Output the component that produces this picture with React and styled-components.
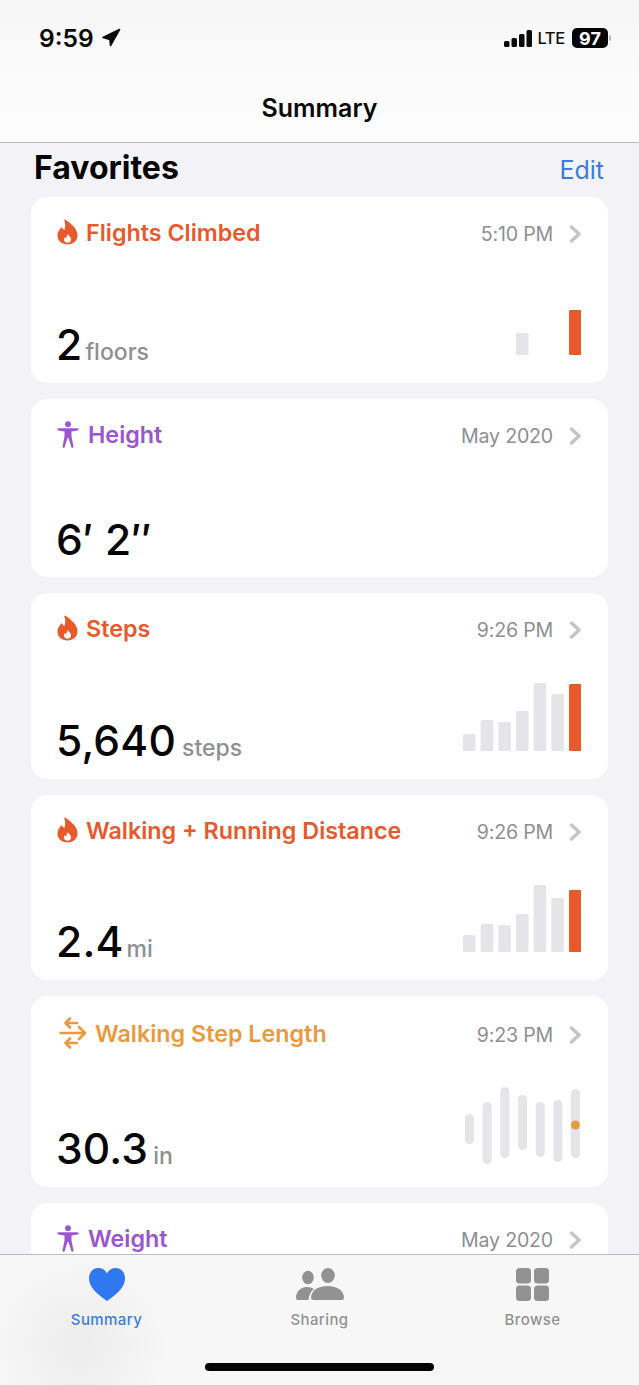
import React from "react"
import styled, { createGlobalStyle } from "styled-components"

const GlobalStyle = createGlobalStyle`
  html, body {
    margin: 0;
    padding: 0;
    background: #f2f2f7;
  }
  body {
    font-family: Inter, "Liberation Sans", sans-serif;
  }
`

const ORANGE = "#e8592b"
const PURPLE = "#9b55cf"
const AMBER = "#ea9a3e"

const Screen = styled.div`
  width: 639px;
  height: 1385px;
  display: flex;
  flex-direction: column;
  overflow: hidden;
  background: #f2f2f7;
`

const Header = styled.header`
  height: 142px;
  flex: none;
  display: flex;
  flex-direction: column;
  background: linear-gradient(180deg, #f6f6f6 0%, #fbfbfb 60%, #fcfcfd 100%);
  border-bottom: 1px solid #bcbcbf;
`

const StatusBar = styled.div`
  display: flex;
  justify-content: space-between;
  align-items: center;
  height: 30px;
  padding: 23px 28px 0 39px;
`

const Clock = styled.div`
  display: flex;
  align-items: center;
  gap: 7px;
  font-size: 24.5px;
  font-weight: 600;
  color: #0a0a0a;
`

const StatusRight = styled.div`
  display: flex;
  align-items: center;
`

const Lte = styled.span`
  font-size: 16.5px;
  font-weight: 500;
  letter-spacing: -0.3px;
  color: #111;
  margin: 0 7px 0 5px;
`

const Battery = styled.span`
  width: 36px;
  height: 20px;
  border-radius: 5px;
  background: #050505;
  color: #fff;
  font-size: 18px;
  font-weight: 700;
  display: flex;
  align-items: center;
  justify-content: center;
`

const BatteryNub = styled.span`
  width: 2px;
  height: 6px;
  margin-left: 1px;
  border-radius: 0 2px 2px 0;
  background: #b9b9bb;
`

const NavTitle = styled.h1`
  margin: 39px 0 0;
  text-align: center;
  font-size: 25px;
  line-height: 32px;
  font-weight: 600;
  color: #0a0a0a;
`

const Content = styled.main`
  flex: 1;
  min-height: 0;
  overflow: hidden;
  padding: 0 31px;
`

const SectionHead = styled.div`
  height: 49px;
  display: flex;
  justify-content: space-between;
  align-items: center;
  padding: 0 4px 5px 3px;
`

const SectionTitle = styled.h2`
  margin: 0;
  font-size: 32px;
  font-weight: 700;
  color: #050505;
`

const EditLink = styled.a`
  font-size: 25px;
  color: #3b7ddd;
  margin-top: 4px;
`

const CardList = styled.div`
  display: flex;
  flex-direction: column;
  gap: 16px;
`

const CardBox = styled.section`
  height: ${(p) => p.$height}px;
  flex: none;
  box-sizing: border-box;
  background: #fff;
  border-radius: 16px;
  padding: ${(p) => p.$top}px 26px 0 26px;
  display: flex;
  flex-direction: column;
  justify-content: space-between;
`

const CardHead = styled.div`
  display: flex;
  align-items: center;
  height: 30px;
`

const CardIcon = styled.svg`
  flex: none;
  margin-left: ${(p) => p.$inset || 0}px;
`

const CardTitle = styled.span`
  flex: 1;
  margin-left: ${(p) => p.$gap}px;
  font-size: 23.3px;
  font-weight: 600;
  color: ${(p) => p.$color};
`

const CardTime = styled.span`
  font-size: 19.6px;
  letter-spacing: -0.2px;
  color: #8e8e93;
  margin: 4px 16px 0 0;
`

const CardFoot = styled.div`
  display: flex;
  justify-content: space-between;
  align-items: flex-end;
  padding-right: 1px;
  margin-bottom: ${(p) => p.$bottom}px;
`

const Reading = styled.div`
  display: flex;
  align-items: baseline;
  line-height: 50px;
  margin-bottom: -${(p) => p.$drop}px;
  margin-left: -1px;
`

const Value = styled.span`
  font-size: 42.5px;
  font-weight: 500;
  color: #050505;
  letter-spacing: 0.2px;
`

const Unit = styled.span`
  margin-left: ${(p) => p.$gap}px;
  font-size: 23px;
  font-weight: 500;
  color: #8e8e93;
`

const Tabs = styled.nav`
  height: 130px;
  flex: none;
  display: flex;
  flex-direction: column;
  border-top: 1px solid #bcbcbf;
  background:
    radial-gradient(circle at 80px 90px, #ececec 0, rgba(236, 236, 236, 0) 90px),
    #f7f7f7;
`

const TabGrid = styled.div`
  display: grid;
  grid-template-columns: repeat(3, 1fr);
  padding-top: 11px;
`

const Tab = styled.div`
  display: flex;
  flex-direction: column;
  align-items: center;
  color: ${(p) => (p.$active ? "#3b7ddd" : "#929292")};
  font-size: 15px;
  font-weight: 500;
  letter-spacing: 0.4px;
`

const TabIcon = styled.div`
  height: 36px;
  display: flex;
  align-items: center;
  justify-content: center;
  margin-bottom: 8px;
`

const HomeBar = styled.div`
  width: 229px;
  height: 8px;
  border-radius: 4px;
  background: #050505;
  margin: auto auto 14px;
`

const ChevronIcon = styled.svg`
  margin-top: 4px;
`

const Chevron = () => (
  <ChevronIcon width="13" height="18" viewBox="0 0 13 18" fill="none">
    <path d="M2.500 2l7.500 7-7.500 7" stroke="#c4c4c7" strokeWidth="3.400" strokeLinecap="round" strokeLinejoin="round" />
  </ChevronIcon>
)

const Flame = () => (
  <CardIcon width="21" height="26" viewBox="0 0 21 26">
    <path
      d="M7 .5C11 1.500 13 4 15 6c3.500 3 5.500 6.500 5.500 10.500 0 5.500-4.500 9-10 9s-10-3.500-10-9c0-4 2.500-6 4-8.500 1 2 2 2.500 3 3C8.500 7.500 8.500 4 7 .5z"
      fill={ORANGE}
    />
    <path
      transform="translate(2.100 4.600) scale(.8)"
      d="M11 13c.5 2 4 3.500 4 7 0 2.500-2 4-4.500 4S6 22.500 6 20c0-1.500.8-2.500 1.500-3 .5 1 1 1 1.500 1.500 0-2 1-3.500 2-5.500z"
      fill="#fff"
    />
  </CardIcon>
)

const Figure = () => (
  <CardIcon width="22" height="27" viewBox="0 0 22 27">
    <circle cx="11" cy="3.200" r="2.900" fill={PURPLE} />
    <path
      d="M1.500 7.300h19c1.400 0 1.400 2.100 0 2.200l-6 1.100v5l2 10c.2 1.400-1.800 1.800-2.200.4L11.500 17h-1L7.700 26c-.4 1.400-2.400 1-2.200-.4l2-10v-5l-6-1.100c-1.400-.1-1.400-2.200 0-2.200z"
      fill={PURPLE}
    />
  </CardIcon>
)

const Swap = () => (
  <CardIcon $inset={2} width="27" height="32" viewBox="0 0 27 32" fill="none">
    <g stroke={AMBER} strokeWidth="2.600" strokeLinecap="round" strokeLinejoin="round">
      <path d="M6.500 6H18M11 1.500L6.500 6l4.500 4.500" />
      <path d="M1.500 16H25.500M20 10l6 6-6 6" />
      <path d="M6.500 26H18M11 21.500L6.500 26l4.500 4.500" />
    </g>
  </CardIcon>
)

const Bars = ({ heights, accent, width = 118 }) => {
  const max = Math.max(...heights)
  return (
    <svg width={width} height={max} viewBox={`0 0 ${width} ${max}`}>
      {heights.map((h, i) =>
        h > 0 ? (
          <rect
            key={i}
            x={i * 17.670}
            y={max - h}
            width="12.500"
            height={h}
            rx="1.500"
            fill={i === heights.length - 1 ? accent : "#e4e4e9"}
          />
        ) : null
      )}
    </svg>
  )
}

const Ranges = ({ ranges, dot, color }) => (
  <svg width="116" height="78" viewBox="0 0 116 78">
    {ranges.map(([top, bottom], i) => (
      <rect key={i} x={i * 17.670} y={top} width="9" height={bottom - top} rx="4.500" fill="#e4e4e9" />
    ))}
    <circle cx={ranges.length * 17.670 - 13.300} cy={dot} r="4.500" fill={color} />
  </svg>
)

const Card = ({ height, icon, gap, title, color, time, value, unit, unitGap = 5, chart, bottom = 28, top = 20, drop = 22 }) => (
  <CardBox $height={height} $top={top}>
    <CardHead>
      {icon}
      <CardTitle $gap={gap} $color={color}>{title}</CardTitle>
      <CardTime>{time}</CardTime>
      <Chevron />
    </CardHead>
    {value && (
      <CardFoot $bottom={bottom}>
        <Reading $drop={drop}>
          <Value>{value}</Value>
          {unit && <Unit $gap={unitGap}>{unit}</Unit>}
        </Reading>
        {chart}
      </CardFoot>
    )}
  </CardBox>
)

const App = () => (
  <Screen>
    <GlobalStyle />
    <Header>
      <StatusBar>
        <Clock>
          9:59
          <svg width="20" height="20" viewBox="0 0 20 20">
            <path
              d="M18.500 1.500L2 9.500l7 2 .5 6z"
              fill="#0a0a0a"
              stroke="#0a0a0a"
              strokeWidth="1.600"
              strokeLinejoin="round"
            />
          </svg>
        </Clock>
        <StatusRight>
          <svg width="28" height="17" viewBox="0 0 28 17" fill="#0a0a0a">
            <rect x="0" y="11" width="5.500" height="6" rx="1.500" />
            <rect x="7.500" y="8" width="5.500" height="9" rx="1.500" />
            <rect x="15" y="4" width="5.500" height="13" rx="1.500" />
            <rect x="22.500" y="0" width="5.500" height="17" rx="1.500" />
          </svg>
          <Lte>LTE</Lte>
          <Battery>97</Battery>
          <BatteryNub />
        </StatusRight>
      </StatusBar>
      <NavTitle>Summary</NavTitle>
    </Header>
    <Content>
      <SectionHead>
        <SectionTitle>Favorites</SectionTitle>
        <EditLink>Edit</EditLink>
      </SectionHead>
      <CardList>
        <Card
          height={186} icon={<Flame />} gap={8} title="Flights Climbed" color={ORANGE}
          time="5:10 PM" value="2" unit="floors" unitGap={3}
          chart={<Bars heights={[0, 0, 0, 22, 0, 0, 45]} accent={ORANGE} />}
        />
        <Card
          height={178} icon={<Figure />} gap={9} title="Height" color={PURPLE}
          time="May 2020" value={"6′ 2″"} drop={16}
        />
        <Card
          height={186} icon={<Flame />} gap={8} title="Steps" color={ORANGE}
          time="9:26 PM" value="5,640" unit="steps" unitGap={6}
          chart={<Bars heights={[17, 31, 29, 40, 68, 57, 67]} accent={ORANGE} />}
        />
        <Card
          height={185} icon={<Flame />} gap={8} title="Walking + Running Distance" color={ORANGE}
          time="9:26 PM" value="2.4" unit="mi" unitGap={3}
          chart={<Bars heights={[17, 28, 27, 38, 67, 54, 62]} accent={ORANGE} />}
        />
        <Card
          height={191} icon={<Swap />} gap={9} title="Walking Step Length" color={AMBER} top={22}
          time="9:23 PM" value="30.3" unit="in" bottom={22} drop={16}
          chart={
            <Ranges
              color={AMBER}
              dot={38}
              ranges={[[27, 57], [15, 77], [0, 71], [8, 63], [15, 70], [13, 75], [2, 71]]}
            />
          }
        />
        <Card
          height={186} icon={<Figure />} gap={9} title="Weight" color={PURPLE}
          time="May 2020"
        />
      </CardList>
    </Content>
    <Tabs>
      <TabGrid>
        <Tab $active>
          <TabIcon>
            <svg width="36" height="33" viewBox="0 0 36 33">
              <path d="M18 33C6 24.500 0 18 0 10.200 0 4.300 4 0 9.500 0 13.200 0 16.300 2 18 5.500 19.700 2 22.800 0 26.500 0 32 0 36 4.300 36 10.200 36 18 30 24.500 18 33z" fill="#2f78f0" />
            </svg>
          </TabIcon>
          Summary
        </Tab>
        <Tab>
          <TabIcon>
            <svg width="48" height="33" viewBox="0 0 48 33" fill="#929292">
              <ellipse cx="12" cy="9.500" rx="5.800" ry="6.800" />
              <ellipse cx="32" cy="7.500" rx="6.800" ry="7.500" />
              <path d="M0 30c0-6 4-11 11-11 2.800 0 5 .8 6.800 2-3 2.500-4.800 6-5.300 11H2c-1.200 0-2-.8-2-2z" />
              <path d="M15 29.500C15 23 21.500 18 31.500 18S48 23 48 29.500c0 1.700-1 2.500-2.500 2.500h-28c-1.500 0-2.500-.8-2.500-2.500z" />
            </svg>
          </TabIcon>
          Sharing
        </Tab>
        <Tab>
          <TabIcon>
            <svg width="33" height="33" viewBox="0 0 33 33" fill="#929292">
              <rect x="0" y="0" width="15" height="15.500" rx="3.500" />
              <rect x="18" y="0" width="15" height="15.500" rx="3.500" />
              <rect x="0" y="17.500" width="15" height="15.500" rx="3.500" />
              <rect x="18" y="17.500" width="15" height="15.500" rx="3.500" />
            </svg>
          </TabIcon>
          Browse
        </Tab>
      </TabGrid>
      <HomeBar />
    </Tabs>
  </Screen>
)

export default App
